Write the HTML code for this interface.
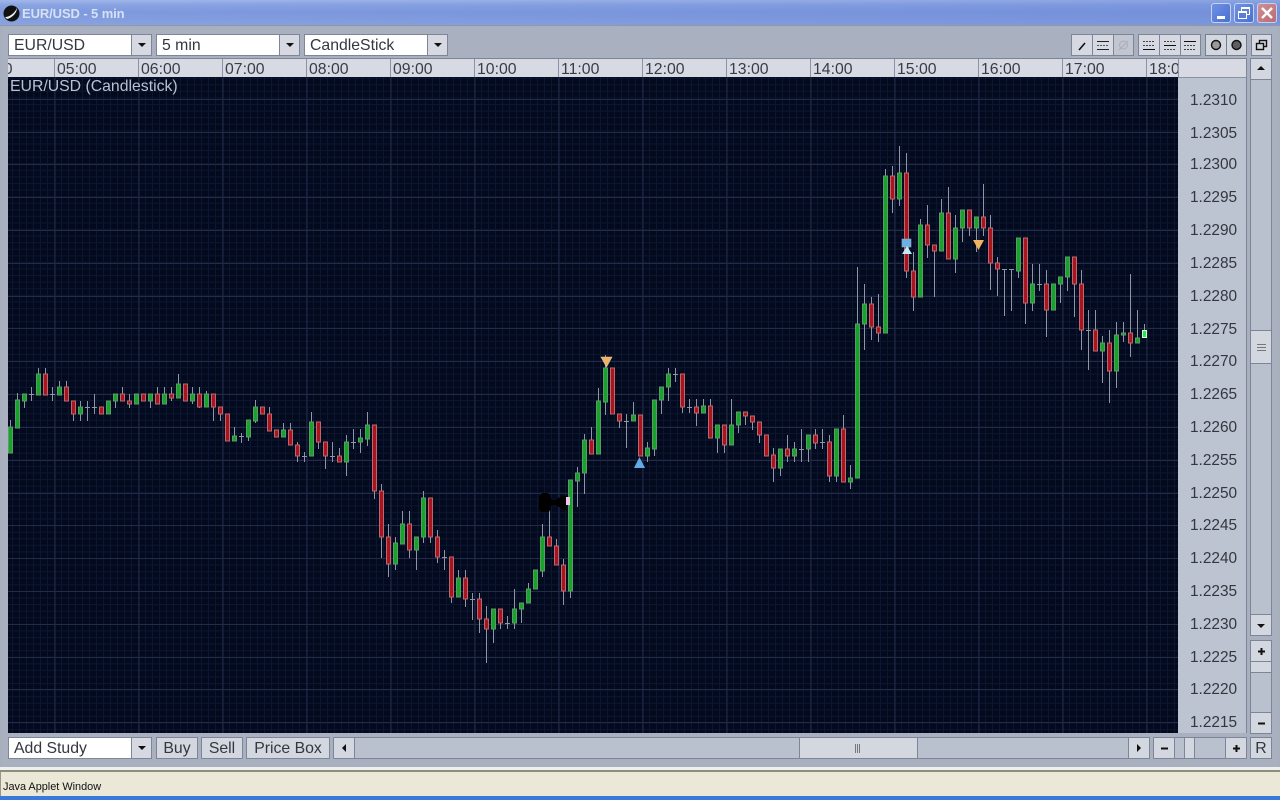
<!DOCTYPE html>
<html>
<head>
<meta charset="utf-8">
<title>EUR/USD - 5 min</title>
<style>
html,body{margin:0;padding:0;width:1280px;height:800px;overflow:hidden;background:#a7aebc}
*{box-sizing:border-box}
body{font-family:"Liberation Sans",sans-serif;position:relative}
.a{position:absolute}
.title{left:0;top:0;width:1280px;height:26px;background:linear-gradient(90deg,rgba(120,145,215,.0) 0,rgba(95,125,210,.35) 100%),linear-gradient(180deg,#a3b8ea 0,#8aa4e2 5px,#7f9ade 12px,#86a0e0 22px,#8ea6dc 26px);border-bottom:1px solid #8f97aa}
.title span{position:absolute;left:22px;top:6px;font-size:13px;font-weight:bold;color:#d6e2f4;white-space:nowrap;letter-spacing:-.1px}
.wb{position:absolute;top:3px;width:20px;height:20px;border-radius:3px;border:1px solid #c4d2f0}
.panel{left:2px;top:27px;width:1276px;height:740px;background:#a9b0bf}
.box{position:absolute;border:1px solid #7d8597;background:#d6d9e2}
.white{background:#fff}
.combo-t{position:absolute;top:1px;left:1px;height:100%;padding-left:4px;font-size:15.8px;line-height:20px;color:#33373f;white-space:nowrap}
.arr{position:absolute;width:0;height:0;border-left:4px solid transparent;border-right:4px solid transparent;border-top:4px solid #111}
.axis{left:8px;top:58px;width:1170px;height:19px;background:#d7dae2;overflow:hidden;border-top:1px solid #7d8597}
.tick{position:absolute;top:0;width:1px;height:19px;background:#8b92a3}
.tl{position:absolute;top:1px;font-size:15.8px;line-height:19px;color:#383c44}
.price{position:absolute;left:1190px;font-size:15.4px;line-height:18px;color:#33373f;width:50px;margin-top:1px}
.btn{position:absolute;background:#d3d7e0;border:1px solid #7d8597;text-align:center;font-size:15.8px;line-height:22px;color:#33373f}
</style>
</head>
<body>
<div class="a title"><span>EUR/USD - 5 min</span></div>
<svg class="a" style="left:3px;top:5px" width="17" height="17" viewBox="0 0 17 17"><circle cx="8.5" cy="8.500" r="8" fill="#111"/><path d="M2 12C6 12 11 9 14 3C14 8 9 13 4 14Z" fill="#e8ecf4"/></svg>
<div class="wb" style="left:1211px;background:linear-gradient(135deg,#6f92e4,#4a70d0)"><div class="a" style="left:5px;top:12px;width:8px;height:3px;background:#fff"></div></div>
<div class="wb" style="left:1234px;background:linear-gradient(135deg,#6f92e4,#4a70d0)"><div class="a" style="left:6px;top:3px;width:9px;height:8px;border:1px solid #fff;border-top-width:2px"></div><div class="a" style="left:3px;top:7px;width:9px;height:8px;border:1px solid #fff;border-top-width:2px;background:#5a7ed6"></div></div>
<div class="wb" style="left:1257px;background:linear-gradient(135deg,#d09096,#bc6a70)"><svg class="a" style="left:3px;top:3px" width="12" height="12"><path d="M1 1L11 11M11 1L1 11" stroke="#fff" stroke-width="2.400"/></svg></div>

<div class="a panel"></div>

<!-- top combos -->
<div class="box white" style="left:8px;top:34px;width:124px;height:22px"><div class="combo-t">EUR/USD</div></div>
<div class="box" style="left:131px;top:34px;width:21px;height:22px"><div class="arr" style="left:6px;top:8px"></div></div>
<div class="box white" style="left:156px;top:34px;width:124px;height:22px"><div class="combo-t">5 min</div></div>
<div class="box" style="left:279px;top:34px;width:21px;height:22px"><div class="arr" style="left:6px;top:8px"></div></div>
<div class="box white" style="left:304px;top:34px;width:124px;height:22px"><div class="combo-t">CandleStick</div></div>
<div class="box" style="left:427px;top:34px;width:21px;height:22px"><div class="arr" style="left:6px;top:8px"></div></div>

<!-- right toolbar -->
<div class="box" style="left:1071px;top:34px;width:22px;height:22px"><svg width="20" height="20"><path d="M7 15L13 8" stroke="#111" stroke-width="1.600"/></svg></div>
<div class="box" style="left:1092px;top:34px;width:22px;height:22px"><svg width="20" height="20"><path d="M4 6.500h12M4 14.500h12" stroke="#222"/><path d="M4 10.500h12" stroke="#555" stroke-dasharray="2 1"/></svg></div>
<div class="box" style="left:1113px;top:34px;width:21px;height:22px;background:#c2c6d0"><svg width="19" height="20"><circle cx="9.500" cy="10" r="4" fill="none" stroke="#a9aeb9"/><path d="M5 15L14 6" stroke="#a9aeb9"/></svg></div>
<div class="box" style="left:1138px;top:34px;width:22px;height:22px"><svg width="20" height="20"><path d="M4 6.500h12M4 10.500h12" stroke="#444" stroke-dasharray="2 1"/><path d="M4 14.500h12" stroke="#111"/></svg></div>
<div class="box" style="left:1159px;top:34px;width:22px;height:22px"><svg width="20" height="20"><path d="M4 6.500h12M4 14.500h12" stroke="#444" stroke-dasharray="2 1"/><path d="M4 10.500h12" stroke="#111"/></svg></div>
<div class="box" style="left:1180px;top:34px;width:21px;height:22px"><svg width="19" height="20"><path d="M3 6.500h12" stroke="#111"/><path d="M3 10.500h12M3 14.500h12" stroke="#444" stroke-dasharray="2 1"/></svg></div>
<div class="a" style="left:1205px;top:34px;width:42px;height:22px;background:#767e90"></div>
<div class="box" style="left:1206px;top:35px;width:20px;height:20px;border:0;background:#d3d7e0"><svg width="20" height="20"><circle cx="10" cy="10" r="4.500" fill="#9a9a9a" stroke="#111" stroke-width="1.400"/></svg></div>
<div class="box" style="left:1227px;top:35px;width:19px;height:20px;border:0;background:#d3d7e0"><svg width="19" height="20"><circle cx="9.500" cy="10" r="4.500" fill="#5e5e5e" stroke="#111" stroke-width="1.400"/></svg></div>
<div class="box" style="left:1251px;top:34px;width:21px;height:22px"><svg width="19" height="20"><rect x="7.500" y="5.500" width="7" height="6" fill="none" stroke="#111" stroke-width="1.400"/><rect x="4.500" y="8.500" width="7" height="6" fill="#d3d7e0" stroke="#111" stroke-width="1.400"/></svg></div>

<!-- chart -->
<svg class="a" style="left:0;top:0" width="1280" height="800" viewBox="0 0 1280 800">
<defs>
<pattern id="mv" patternUnits="userSpaceOnUse" x="5" y="0" width="7" height="10"><path d="M.5 0V10" stroke="#0c1630" stroke-width="1"/></pattern>
<pattern id="mh" patternUnits="userSpaceOnUse" x="0" y="97.400" width="10" height="6.580"><path d="M0 .5H10" stroke="#0c1630" stroke-width="1"/></pattern>
</defs>
<rect x="8" y="77" width="1170" height="656" fill="#030a1e"/>
<rect x="8" y="77" width="1170" height="656" fill="url(#mv)"/>
<rect x="8" y="77" width="1170" height="656" fill="url(#mh)"/>
<path fill="none" stroke="#222c48" stroke-width="1" d="M55 77V733M139 77V733M223 77V733M307 77V733M391 77V733M475 77V733M559 77V733M643 77V733M727 77V733M811 77V733M895 77V733M979 77V733M1063 77V733M1147 77V733
M8 99.500H1178M8 132.500H1178M8 164.500H1178M8 197.500H1178M8 230.500H1178M8 263.500H1178M8 296.500H1178M8 328.500H1178M8 361.500H1178M8 394.500H1178M8 427.500H1178M8 460.500H1178M8 493.500H1178M8 525.500H1178M8 558.500H1178M8 591.500H1178M8 624.500H1178M8 657.500H1178M8 689.500H1178M8 722.500H1178"/>
<!-- wicks -->
<path fill="none" stroke="#8e96a8" stroke-width="1" d="M10.500 420V453M17.500 393V428M24.500 394V408M31.500 387V401M38.500 368V395M45.500 368V395M52.500 387V401M59.500 381V395M66.500 381V401M73.500 401V421M80.500 401V421M87.500 401V421M94.500 394V414M115.500 394V408M122.500 387V401M129.500 394V408M150.500 394V408M157.500 387V404M164.500 387V404M171.500 387V401M178.500 374V398M192.500 387V404M199.500 387V408M206.500 391V407M213.500 394V421M220.500 407V421M234.500 427V441M241.500 433V443M248.500 420V441M255.500 400V423M269.500 407V431M283.500 423V437M290.500 423V445M297.500 442V462M304.500 452V462M311.500 412V456M318.500 422V449M325.500 442V469M332.500 442V462M339.500 448V462M346.500 435V476M353.500 429V449M360.500 429V453M367.500 412V446M374.500 425V499M381.500 484V558M388.500 524V577M395.500 537V570M402.500 511V544M409.500 511V558M416.500 537V570M423.500 491V543M430.500 498V543M437.500 530V563M444.500 550V570M451.500 557V603M458.500 570V597M465.500 570V607M472.500 593V620M479.500 593V633M486.500 606V663M493.500 609V643M500.500 609V629M507.500 616V629M514.500 589V629M521.500 603V623M528.500 583V603M542.500 524V577M549.500 507V546M556.500 539V565M563.500 559V605M570.500 480V598M577.500 467V507M584.500 434V494M591.500 427V454M598.500 388V454M605.500 355V415M619.500 414V428M626.500 414V448M633.500 402V421M647.500 442V462M654.500 400V456M661.500 387V414M668.500 368V401M675.500 368V382M682.500 374V413M689.500 399V413M696.500 399V426M703.500 399V413M710.500 399V438M717.500 425V453M724.500 425V453M731.500 399V445M738.500 412V433M745.500 412V425M752.500 416V430M759.500 422V443M773.500 448V482M780.500 449V476M787.500 435V462M794.500 442V462M801.500 429V462M808.500 435V462M815.500 429V449M822.500 429V449M829.500 435V482M836.500 429V482M843.500 415V482M850.500 465V489M857.500 267V478M864.500 284V350M871.500 297V340M878.500 294V342M885.500 169V333M892.500 166V213M899.500 146V206M906.500 153V278M913.500 252V311M920.500 219V297M927.500 205V258M934.500 245V297M941.500 199V251M948.500 187V259M955.500 215V273M962.500 210V242M969.500 210V236M976.500 217V252M983.500 184V236M990.500 215V290M997.500 257V296M1004.500 269V316M1011.500 269V311M1018.500 238V278M1025.500 238V324M1032.500 264V311M1039.500 264V291M1046.500 270V337M1060.500 277V303M1067.500 257V291M1074.500 257V317M1081.500 270V350M1088.500 310V370M1095.500 310V351M1102.500 336V383M1109.500 330V403M1116.500 322V388M1123.500 322V342M1130.500 274V357M1137.500 310V343M1144.500 324V338
M29 394.500h5M50 394.500h5M85 407.500h5M92 407.500h5M239 436.500h5M302 456.500h5M330 456.500h5M351 442.500h5M442 557.500h5M470 599.500h5M505 623.500h5M624 421.500h5M673 374.500h5M687 407.500h5M799 449.500h5M820 442.500h5M1002 269.500h5M1009 269.500h5M1037 284.500h5M1086 330.500h5"/>
<!-- green -->
<path fill="#16a32a" stroke="#5c9a68" stroke-width="1" d="M8.500 427h4V453h-4zM15.500 400h4V428h-4zM22.500 394h4V401h-4zM36.500 374h4V395h-4zM57.500 387h4V395h-4zM78.500 407h4V414h-4zM106.500 401h4V414h-4zM113.500 394h4V401h-4zM134.500 394h4V404h-4zM148.500 394h4V401h-4zM162.500 394h4V404h-4zM176.500 384h4V398h-4zM190.500 394h4V401h-4zM204.500 394h4V407h-4zM232.500 436h4V441h-4zM246.500 420h4V437h-4zM253.500 407h4V421h-4zM281.500 430h4V437h-4zM309.500 422h4V456h-4zM344.500 442h4V462h-4zM358.500 438h4V442h-4zM365.500 425h4V439h-4zM393.500 543h4V564h-4zM400.500 524h4V544h-4zM414.500 537h4V550h-4zM421.500 498h4V537h-4zM456.500 578h4V597h-4zM491.500 609h4V629h-4zM512.500 609h4V623h-4zM519.500 603h4V609h-4zM526.500 589h4V603h-4zM533.500 570h4V589h-4zM540.500 537h4V571h-4zM568.500 480h4V591h-4zM575.500 473h4V481h-4zM582.500 440h4V473h-4zM596.500 401h4V454h-4zM603.500 368h4V402h-4zM631.500 415h4V421h-4zM645.500 448h4V456h-4zM652.500 400h4V449h-4zM659.500 387h4V400h-4zM666.500 374h4V387h-4zM701.500 406h4V413h-4zM715.500 425h4V438h-4zM729.500 425h4V445h-4zM736.500 412h4V425h-4zM778.500 449h4V468h-4zM792.500 449h4V456h-4zM806.500 435h4V449h-4zM834.500 429h4V476h-4zM848.500 478h4V482h-4zM855.500 324h4V478h-4zM862.500 304h4V324h-4zM883.500 176h4V333h-4zM897.500 173h4V199h-4zM918.500 225h4V297h-4zM939.500 213h4V251h-4zM953.500 228h4V259h-4zM960.500 210h4V228h-4zM974.500 217h4V228h-4zM1016.500 238h4V271h-4zM1030.500 284h4V303h-4zM1051.500 284h4V310h-4zM1058.500 277h4V284h-4zM1065.500 257h4V277h-4zM1100.500 343h4V351h-4zM1114.500 335h4V371h-4zM1121.500 333h4V335h-4zM1135.500 338h4V343h-4z"/>
<!-- red -->
<path fill="#a9141e" stroke="#b8686e" stroke-width="1" d="M43.500 374h4V395h-4zM64.500 387h4V401h-4zM71.500 401h4V414h-4zM99.500 407h4V414h-4zM120.500 394h4V401h-4zM127.500 401h4V404h-4zM141.500 394h4V401h-4zM155.500 394h4V404h-4zM169.500 394h4V398h-4zM183.500 384h4V401h-4zM197.500 394h4V407h-4zM211.500 394h4V407h-4zM218.500 407h4V414h-4zM225.500 414h4V441h-4zM260.500 407h4V414h-4zM267.500 414h4V431h-4zM274.500 430h4V437h-4zM288.500 430h4V445h-4zM295.500 445h4V456h-4zM316.500 422h4V442h-4zM323.500 442h4V456h-4zM337.500 456h4V462h-4zM372.500 425h4V491h-4zM379.500 491h4V537h-4zM386.500 537h4V564h-4zM407.500 524h4V550h-4zM428.500 498h4V537h-4zM435.500 537h4V557h-4zM449.500 557h4V597h-4zM463.500 578h4V599h-4zM477.500 599h4V619h-4zM484.500 619h4V629h-4zM498.500 609h4V623h-4zM547.500 537h4V546h-4zM554.500 546h4V565h-4zM561.500 565h4V591h-4zM589.500 440h4V454h-4zM610.500 368h4V414h-4zM617.500 414h4V421h-4zM638.500 415h4V456h-4zM680.500 374h4V407h-4zM694.500 407h4V413h-4zM708.500 406h4V438h-4zM722.500 425h4V445h-4zM743.500 412h4V416h-4zM750.500 416h4V422h-4zM757.500 422h4V435h-4zM764.500 435h4V456h-4zM771.500 455h4V468h-4zM785.500 449h4V456h-4zM813.500 435h4V443h-4zM827.500 442h4V476h-4zM841.500 429h4V482h-4zM869.500 304h4V327h-4zM876.500 327h4V333h-4zM890.500 176h4V199h-4zM904.500 173h4V271h-4zM911.500 271h4V297h-4zM925.500 225h4V245h-4zM932.500 245h4V251h-4zM946.500 213h4V259h-4zM967.500 210h4V228h-4zM981.500 217h4V228h-4zM988.500 228h4V263h-4zM995.500 263h4V269h-4zM1023.500 238h4V303h-4zM1044.500 284h4V310h-4zM1072.500 257h4V284h-4zM1079.500 284h4V330h-4zM1093.500 330h4V351h-4zM1107.500 343h4V371h-4zM1128.500 333h4V343h-4z"/>
<rect x="1142.500" y="330.500" width="4" height="7" fill="#22e84a" stroke="#d8f5dc"/>
<!-- markers -->
<path d="M601 357h11l-5.500 10z" fill="#f2b264" stroke="#d8c9a0" stroke-width=".6"/>
<path d="M634 468l5.500-11 5.500 11z" fill="#63a9e6"/>
<rect x="902" y="239" width="9" height="8" fill="#6cb0ea" stroke="#8fa8c0" stroke-width=".6"/>
<path d="M902 254l5-8 5 8z" fill="#bfeaf8"/>
<path d="M973 240h11l-5.500 10z" fill="#f2b264"/>
<!-- black cursor blob -->
<path d="M539 497l3-4h6l3 4v2l4 1 5-3 3-1h4v14h-4l-4-3-4-2-4 1v2l-2 4h-7l-3-3z" fill="#000"/>
<rect x="566" y="497" width="4" height="8" fill="#efc8f0"/>
<text x="10" y="91" font-family="'Liberation Sans',sans-serif" font-size="15.800" fill="#b7c2d2">EUR/USD (Candlestick)</text>
</svg>

<!-- time axis -->
<div class="a axis">
<div class="tl" style="left:-35px">04:00</div>
<div class="tick" style="left:46px"></div><div class="tl" style="left:49px">05:00</div>
<div class="tick" style="left:130px"></div><div class="tl" style="left:133px">06:00</div>
<div class="tick" style="left:214px"></div><div class="tl" style="left:217px">07:00</div>
<div class="tick" style="left:298px"></div><div class="tl" style="left:301px">08:00</div>
<div class="tick" style="left:382px"></div><div class="tl" style="left:385px">09:00</div>
<div class="tick" style="left:466px"></div><div class="tl" style="left:469px">10:00</div>
<div class="tick" style="left:550px"></div><div class="tl" style="left:553px">11:00</div>
<div class="tick" style="left:634px"></div><div class="tl" style="left:637px">12:00</div>
<div class="tick" style="left:718px"></div><div class="tl" style="left:721px">13:00</div>
<div class="tick" style="left:802px"></div><div class="tl" style="left:805px">14:00</div>
<div class="tick" style="left:886px"></div><div class="tl" style="left:889px">15:00</div>
<div class="tick" style="left:970px"></div><div class="tl" style="left:973px">16:00</div>
<div class="tick" style="left:1054px"></div><div class="tl" style="left:1057px">17:00</div>
<div class="tick" style="left:1138px"></div><div class="tl" style="left:1141px">18:00</div>
</div>
<div class="a" style="left:1178px;top:58px;width:69px;height:19px;background:#d7dae2;border-top:1px solid #7d8597;border-right:1px solid #7d8597;border-left:1px solid #8b92a3"></div>

<!-- price axis -->
<div class="a" style="left:1178px;top:77px;width:69px;height:656px;background:#bcc3d1;border-right:1px solid #7d8597;border-top:1px solid #8b92a3"></div>
<div class="price" style="top:91px">1.2310</div>
<div class="price" style="top:124px">1.2305</div>
<div class="price" style="top:155px">1.2300</div>
<div class="price" style="top:188px">1.2295</div>
<div class="price" style="top:221px">1.2290</div>
<div class="price" style="top:254px">1.2285</div>
<div class="price" style="top:287px">1.2280</div>
<div class="price" style="top:320px">1.2275</div>
<div class="price" style="top:352px">1.2270</div>
<div class="price" style="top:385px">1.2265</div>
<div class="price" style="top:418px">1.2260</div>
<div class="price" style="top:451px">1.2255</div>
<div class="price" style="top:484px">1.2250</div>
<div class="price" style="top:516px">1.2245</div>
<div class="price" style="top:549px">1.2240</div>
<div class="price" style="top:582px">1.2235</div>
<div class="price" style="top:615px">1.2230</div>
<div class="price" style="top:648px">1.2225</div>
<div class="price" style="top:680px">1.2220</div>
<div class="price" style="top:713px">1.2215</div>

<!-- vertical scrollbar -->
<div class="a" style="left:1250px;top:58px;width:22px;height:578px;background:#b9c0ce;border:1px solid #7d8597"></div>
<div class="btn" style="left:1250px;top:58px;width:22px;height:22px"><div class="arr" style="left:6px;top:7px;border-top:0;border-bottom:4px solid #111"></div></div>
<div class="btn" style="left:1250px;top:330px;width:22px;height:34px"><svg class="a" style="left:5px;top:13px" width="12" height="8"><path d="M1 .5h9M1 3.500h9M1 6.500h9" stroke="#777"/></svg></div>
<div class="btn" style="left:1250px;top:614px;width:22px;height:22px"><div class="arr" style="left:6px;top:9px"></div></div>
<div class="a" style="left:1250px;top:640px;width:22px;height:94px;background:#b9c0ce;border:1px solid #7d8597"></div>
<div class="btn" style="left:1250px;top:640px;width:22px;height:22px"><svg class="a" style="left:6px;top:6px" width="9" height="9"><path d="M4.500 1v7M1 4.500h7" stroke="#111" stroke-width="2"/></svg></div>
<div class="btn" style="left:1250px;top:661px;width:22px;height:12px"></div>
<div class="btn" style="left:1250px;top:712px;width:22px;height:22px"><svg class="a" style="left:6px;top:6px" width="9" height="9"><path d="M1 4.500h7" stroke="#111" stroke-width="2"/></svg></div>

<!-- bottom toolbar -->
<div class="box white" style="left:8px;top:737px;width:124px;height:22px"><div class="combo-t">Add Study</div></div>
<div class="box" style="left:131px;top:737px;width:21px;height:22px"><div class="arr" style="left:6px;top:8px"></div></div>
<div class="btn" style="left:156px;top:737px;width:42px;height:22px">Buy</div>
<div class="btn" style="left:201px;top:737px;width:42px;height:22px">Sell</div>
<div class="btn" style="left:246px;top:737px;width:84px;height:22px">Price Box</div>

<div class="a" style="left:333px;top:737px;width:817px;height:22px;background:#b9c0ce;border:1px solid #7d8597"></div>
<div class="btn" style="left:333px;top:737px;width:22px;height:22px"><div class="a" style="left:8px;top:6px;width:0;height:0;border-top:4px solid transparent;border-bottom:4px solid transparent;border-right:4px solid #111"></div></div>
<div class="btn" style="left:799px;top:737px;width:119px;height:22px"><svg class="a" style="left:54px;top:5px" width="8" height="12"><path d="M1.500 1v9M3.500 1v9M5.500 1v9" stroke="#777"/></svg></div>
<div class="btn" style="left:1128px;top:737px;width:22px;height:22px"><div class="a" style="left:8px;top:6px;width:0;height:0;border-top:4px solid transparent;border-bottom:4px solid transparent;border-left:4px solid #111"></div></div>

<div class="a" style="left:1153px;top:737px;width:94px;height:22px;background:#b9c0ce;border:1px solid #7d8597"></div>
<div class="btn" style="left:1153px;top:737px;width:22px;height:22px"><svg class="a" style="left:6px;top:6px" width="9" height="9"><path d="M1 4.500h7" stroke="#111" stroke-width="2"/></svg></div>
<div class="btn" style="left:1184px;top:737px;width:11px;height:22px"></div>
<div class="btn" style="left:1225px;top:737px;width:22px;height:22px"><svg class="a" style="left:6px;top:6px" width="9" height="9"><path d="M4.500 1v7M1 4.500h7" stroke="#111" stroke-width="2"/></svg></div>
<div class="btn" style="left:1250px;top:737px;width:22px;height:22px">R</div>

<!-- status bar -->
<div class="a" style="left:0;top:767px;width:1280px;height:3px;background:#eef0ee"></div>
<div class="a" style="left:0;top:770px;width:1280px;height:2px;background:#8f8c7c"></div>
<div class="a" style="left:0;top:772px;width:1280px;height:24px;background:#ebe8d8;border-left:1px solid #9a978a"></div>
<div class="a" style="left:3px;top:780px;font-size:10.900px;line-height:14px;color:#111;white-space:nowrap">Java Applet Window</div>
<div class="a" style="left:0;top:796px;width:1280px;height:4px;background:#3a78dc"></div>
</body>
</html>
